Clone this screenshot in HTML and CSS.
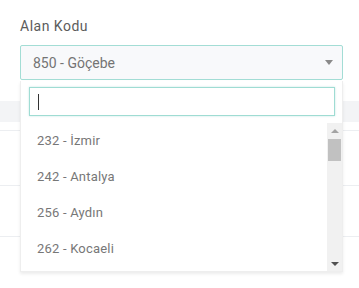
FILE: index.html
```html
<!DOCTYPE html>
<html lang="tr">
<head>
<meta charset="utf-8">
<link rel="stylesheet" href="styles.css">
</head>
<body>
<div class="page">
  <div class="field">
    <label class="label">Alan Kodu</label>
    <div class="select">
      <span class="select-value">850 - Göçebe</span>
      <span class="select-arrow"></span>
    </div>
    <div class="dropdown">
      <div class="search-wrap"><div class="search"><span class="caret"></span></div></div>
      <div class="list-wrap">
        <ul class="options">
          <li>232 - İzmir</li>
          <li>242 - Antalya</li>
          <li>256 - Aydın</li>
          <li>262 - Kocaeli</li>
        </ul>
        <div class="scrollbar">
          <span class="sb-up"></span>
          <div class="sb-track"><span class="sb-thumb"></span></div>
          <span class="sb-down"></span>
        </div>
      </div>
    </div>
  </div>
  <div class="table">
    <div class="thead"></div>
    <div class="row r1"></div>
    <div class="row r2"></div>
    <div class="row r3"></div>
    <div class="tfoot"><div class="cell-grey"></div></div>
  </div>
</div>
</body>
</html>
```
FILE: styles.css
```css
html, body {
  margin: 0;
  padding: 0;
  background: #fff;
  font-family: Roboto, "Liberation Sans", sans-serif;
}
.page {
  position: relative;
  width: 359px;
  height: 288px;
  overflow: hidden;
}
.field {
  position: relative;
  padding: 16px 16px 0 20px;
}
.label {
  display: block;
  font-size: 14px;
  line-height: 20px;
  color: #5c5c5c;
  letter-spacing: 0.5px;
  margin-bottom: 9px;
}
.select {
  box-sizing: border-box;
  height: 35px;
  width: 323px;
  border: 1px solid #a3ddd5;
  border-radius: 2px;
  background: #f8f9fb;
  display: flex;
  align-items: center;
  justify-content: space-between;
  padding: 0 8px 0 12px;
}
.select-value {
  font-size: 14px;
  color: #747474;
}
.select-arrow {
  width: 0;
  height: 0;
  border-left: 4px solid transparent;
  border-right: 4px solid transparent;
  border-top: 5px solid #8a8a8a;
  margin-right: 1px;
}
.dropdown {
  position: absolute;
  z-index: 2;
  left: 20px;
  top: 81px;
  width: 323px;
  box-sizing: border-box;
  background: #fff;
  border: 1px solid #eeeeee;
  border-top: none;
  box-shadow: 0 2px 3px rgba(0, 0, 0, 0.08);
}
.search-wrap {
  padding: 6px 7px 7px 8px;
}
.search {
  box-sizing: border-box;
  height: 29px;
  border: 1px solid #9fdcd3;
  box-shadow: 0 0 2px rgba(110, 200, 190, 0.4);
  display: flex;
  align-items: center;
  padding-left: 8px;
}
.caret {
  width: 1px;
  height: 16px;
  background: #333;
}
.list-wrap {
  display: flex;
  height: 148px;
}
.options {
  flex: 1;
  list-style: none;
  margin: 0;
  padding: 0;
  overflow: hidden;
}
.options li {
  height: 36px;
  line-height: 36px;
  padding-left: 16px;
  font-size: 13px;
  color: #777;
  letter-spacing: 0.2px;
}
.scrollbar {
  width: 15px;
  background: #f1f1f1;
  display: flex;
  flex-direction: column;
  align-items: center;
}
.sb-up, .sb-down {
  height: 15px;
  width: 15px;
  display: flex;
  align-items: center;
  justify-content: center;
}
.sb-up::before {
  content: "";
  border-left: 4px solid transparent;
  border-right: 4px solid transparent;
  border-bottom: 4px solid #a3a3a3;
}
.sb-down::before {
  content: "";
  border-left: 4px solid transparent;
  border-right: 4px solid transparent;
  border-top: 4px solid #505050;
}
.sb-track {
  flex: 1;
  width: 15px;
  display: flex;
  justify-content: center;
  padding-top: 1px;
}
.sb-thumb {
  width: 13px;
  height: 22px;
  background: #c1c1c1;
}
.table {
  position: absolute;
  left: 0;
  top: 101px;
  width: 359px;
  z-index: 1;
}
.thead {
  height: 21px;
  background: #f3f4f6;
}
.row {
  border-bottom: 1px solid #eceef1;
}
.r1 { height: 8px; }
.r2 { height: 54px; }
.r3 { height: 50px; }
.tfoot {
  height: 34px;
  display: flex;
  align-items: flex-end;
}
.cell-grey {
  margin-left: 167px;
  width: 30px;
  height: 16px;
  background: #f3f5f8;
}
```
